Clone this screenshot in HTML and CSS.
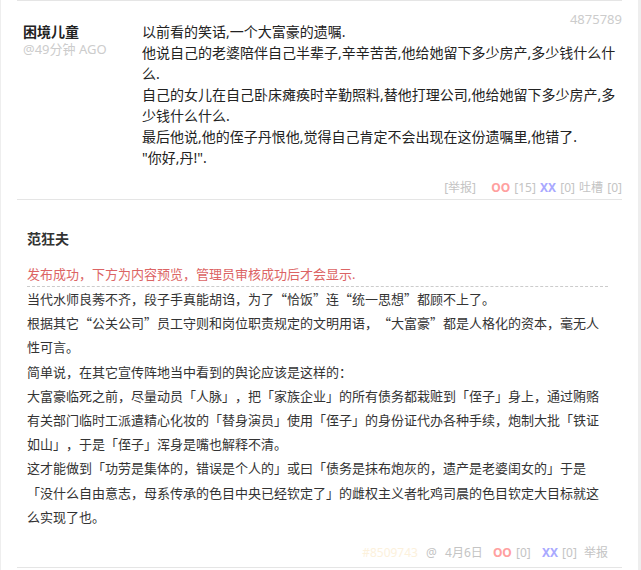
FILE: index.html
```html
<!DOCTYPE html>
<html lang="zh-CN">
<head>
  <meta charset="UTF-8">
  <meta name="viewport" content="width=device-width, initial-scale=1.0">
  <title>评论</title>
  <link rel="stylesheet" href="styles.css">
</head>
<body>
  <div class="wrap">
    <ol class="commentlist">
      <li class="comment">
        <div class="row">
          <div class="author">
            <strong>困境儿童</strong>
            <small>@49分钟 AGO</small>
          </div>
          <div class="text">
            <span class="righttext">4875789</span>
            <p>以前看的笑话,一个大富豪的遗嘱.<br>他说自己的老婆陪伴自己半辈子,辛辛苦苦,他给她留下多少房产,多少钱什么什么.<br>自己的女儿在自己卧床瘫痪时辛勤照料,替他打理公司,他给她留下多少房产,多少钱什么什么.<br>最后他说,他的侄子丹恨他,觉得自己肯定不会出现在这份遗嘱里,他错了.<br>"你好,丹!".</p>
          </div>
        </div>
        <div class="vote">
          <span class="report">[举报]</span>
          <span class="oo">OO</span> [15]
          <span class="xx">XX</span> [0]
          吐槽 [0]
        </div>
      </li>
      <li class="comment preview">
        <strong class="name">范狂夫</strong>
        <p class="notice">发布成功，下方为内容预览，管理员审核成功后才会显示.</p>
        <p class="content">当代水师良莠不齐，段子手真能胡诌，为了“恰饭”连“统一思想”都顾不上了。<br>根据其它“公关公司”员工守则和岗位职责规定的文明用语，“大富豪”都是人格化的资本，毫无人性可言。<br>简单说，在其它宣传阵地当中看到的舆论应该是这样的：<br>大富豪临死之前，尽量动员「人脉」，把「家族企业」的所有债务都栽赃到「侄子」身上，通过贿赂有关部门临时工派遣精心化妆的「替身演员」使用「侄子」的身份证代办各种手续，炮制大批「铁证如山」，于是「侄子」浑身是嘴也解释不清。<br>这才能做到「功劳是集体的，错误是个人的」或曰「债务是抹布炮灰的，遗产是老婆闺女的」于是「没什么自由意志，母系传承的色目中央已经钦定了」的雌权主义者牝鸡司晨的色目钦定大目标就这么实现了也。</p>
        <div class="vote">
          <span class="id">#8509743</span>
          <span class="at">@</span>
          <span class="date">4月6日</span>
          <span class="oo">OO</span> [0]
          <span class="xx">XX</span> [0]
          <span class="report">举报</span>
        </div>
      </li>
    </ol>
  </div>
</body>
</html>
```

FILE: styles.css
```css
* {
  box-sizing: border-box;
  margin: 0;
  padding: 0;
}

body {
  background-color: #eeeeee;
  font-family: "Noto Sans", "Noto Sans CJK SC", sans-serif;
  color: #333;
  text-spacing-trim: space-all;
}

.wrap {
  margin-left: 1px;
  width: 637px;
  min-height: 570px;
  background-color: #fff;
}

.commentlist {
  list-style: none;
  padding-left: 16px;
  width: 621px;
}

.comment {
  border-bottom: 1px solid #e5e5e5;
  &:first-child {
    border-top: 1px solid #e5e5e5;
  }
}

/* comment with author column */
.comment .row {
  display: flex;
  padding: 20px 0 0 6px;
  .author {
    width: 119px;
    padding-top: 2px;
    strong {
      display: block;
      font-size: 14px;
      line-height: 18px;
      color: #222;
    }
    small {
      display: block;
      font-size: 13px;
      line-height: 17px;
      color: #ccc;
    }
  }
  .text {
    flex: 1;
    .righttext {
      display: block;
      text-align: right;
      font-size: 13px;
      line-height: 16px;
      color: #ccc;
      margin: -10px 0 -6px;
    }
    p {
      font-size: 14px;
      line-height: 21px;
      color: #222;
    }
  }
}

.vote {
  text-align: right;
  font-size: 12px;
  line-height: 20px;
  color: #c4c4c4;
  word-spacing: 1px;
  margin-top: 10px;
  padding-bottom: 1px;
  .report {
    margin-right: 11px;
  }
  .oo {
    font-weight: bold;
    color: #ffa0a0;
  }
  .xx {
    font-weight: bold;
    color: #a9a9ff;
  }
}

/* posted preview */
.preview {
  padding: 29px 14px 0 10px;
  .name {
    display: block;
    font-size: 14px;
    line-height: 20px;
    margin-bottom: 16px;
  }
  .notice {
    font-size: 13px;
    line-height: 19px;
    color: #dc6464;
    padding-bottom: 2px;
    border-bottom: 1px dashed #ccc;
  }
  .content {
    font-family: "Noto Sans CJK SC", sans-serif;
    font-variant-east-asian: full-width;
    font-size: 13px;
    line-height: 24.2px;
  }
  .vote {
    margin-top: 14px;
    padding-bottom: 4px;
    .id {
      color: #fcf1dc;
    }
    .at,
    .date {
      margin-left: 4px;
    }
    .oo {
      margin-left: 6px;
    }
    .xx {
      margin-left: 7px;
    }
    .report {
      margin: 0 0 0 3px;
    }
  }
}
```
